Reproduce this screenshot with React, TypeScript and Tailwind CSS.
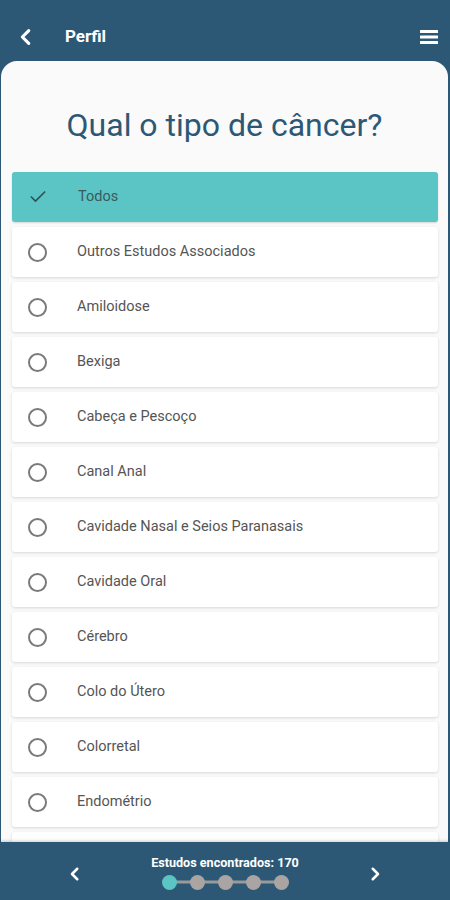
import React from 'react';
import { Check } from 'lucide-react';

const CANCER_TYPES = [
  'Outros Estudos Associados',
  'Amiloidose',
  'Bexiga',
  'Cabeça e Pescoço',
  'Canal Anal',
  'Cavidade Nasal e Seios Paranasais',
  'Cavidade Oral',
  'Cérebro',
  'Colo do Útero',
  'Colorretal',
  'Endométrio',
];

const Chevron: React.FC<{ dir: 'left' | 'right'; className?: string }> = ({ dir, className }) => (
  <svg viewBox="0 0 24 24" className={className} fill="none" stroke="currentColor" strokeWidth={3.4} strokeLinecap="round" strokeLinejoin="round">
    {dir === 'left' ? <path d="M15 5l-7 7 7 7" /> : <path d="M9 5l7 7-7 7" />}
  </svg>
);

const App: React.FC = () => {
  return (
    <div className="w-[450px] h-[900px] flex flex-col bg-[#2c5876] overflow-hidden" style={{ fontFamily: 'Roboto, "Liberation Sans", sans-serif' }}>
      {/* header */}
      <div className="h-[61px] flex items-center pt-[13px] px-[16px] text-white shrink-0">
        <Chevron dir="left" className="w-[22px] h-[22px] -ml-[1px]" />
        <span className="ml-[28px] text-[17px] font-bold">Perfil</span>
        <svg viewBox="0 0 18 14" className="ml-auto w-[18px] h-[14px] mr-[-4px]" fill="#ffffff">
          <rect x="0" y="0" width="18" height="3" rx="0.5" />
          <rect x="0" y="5.5" width="18" height="3" rx="0.5" />
          <rect x="0" y="11" width="18" height="3" rx="0.5" />
        </svg>
      </div>

      {/* card */}
      <div className="flex-1 min-h-0 bg-[#fafafa] rounded-t-[16px] mx-[1px] mr-[2px] overflow-hidden">
        <h1 className="text-[32px] leading-[38px] text-center text-[#2c5876] pt-[45px] pb-[28px]">
          Qual o tipo de câncer?
        </h1>
        <div className="flex flex-col gap-[5px] pl-[11px] pr-[10px]">
          <div className="h-[50px] rounded-[3px] bg-[#5bc4c4] flex items-center shadow-[0_1px_2px_rgba(0,0,0,0.15)]">
            <Check className="w-[20px] h-[20px] ml-[16px] text-[#2f5558]" strokeWidth={2} />
            <span className="ml-[30px] text-[14.5px] text-[#3a5a5c]">Todos</span>
          </div>
          {CANCER_TYPES.map((name) => (
            <div key={name} className="h-[50px] rounded-[3px] bg-white flex items-center shadow-[0_1px_3px_rgba(0,0,0,0.14)]">
              <span className="w-[19px] h-[19px] ml-[16px] rounded-full border-[2px] border-[#7a7a7a]" />
              <span className="ml-[30px] text-[14.5px] text-[#555555]">{name}</span>
            </div>
          ))}
          {/* next row, scrolled under the footer */}
          <div className="h-[50px] rounded-[3px] bg-white shadow-[0_1px_3px_rgba(0,0,0,0.14)]" />
        </div>
      </div>

      {/* footer */}
      <div className="h-[58px] shrink-0 flex items-center justify-between px-[66px] text-white shadow-[0_-1px_3px_rgba(0,0,0,0.2)]">
        <Chevron dir="left" className="w-[18px] h-[18px] mt-[6px]" />
        <div className="flex flex-col items-center pt-[2px]">
          <span className="text-[12.6px] font-bold leading-[15px]">Estudos encontrados: 170</span>
          <div className="relative flex items-center gap-[13px] mt-[5px]">
            <div className="absolute left-[7px] right-[7px] top-1/2 -translate-y-1/2 h-[3px] bg-[#9a9a9a]" />
            <span className="relative w-[15px] h-[15px] rounded-full bg-[#5bc4c4]" />
            <span className="relative w-[15px] h-[15px] rounded-full bg-[#aaa5a3]" />
            <span className="relative w-[15px] h-[15px] rounded-full bg-[#aaa5a3]" />
            <span className="relative w-[15px] h-[15px] rounded-full bg-[#aaa5a3]" />
            <span className="relative w-[15px] h-[15px] rounded-full bg-[#aaa5a3]" />
          </div>
        </div>
        <Chevron dir="right" className="w-[18px] h-[18px] mt-[6px]" />
      </div>
    </div>
  );
};

export default App;
